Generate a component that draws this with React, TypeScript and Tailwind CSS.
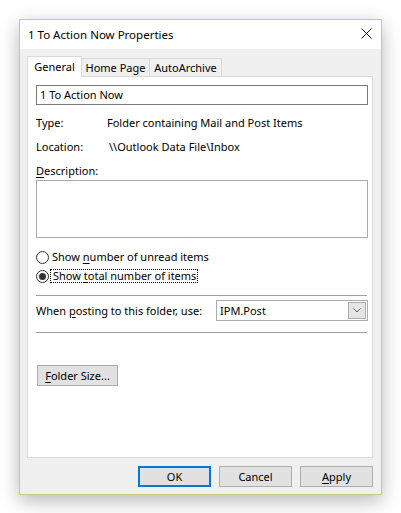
import type { ReactNode } from "react";

const FONT = "font-['Noto_Sans',sans-serif]";

const BTN =
  "flex h-[21px] items-center justify-center border bg-[#e1e1e1] text-[11px] text-black";

function Key({ children }: { children: ReactNode }) {
  return <span className="underline underline-offset-2">{children}</span>;
}

function Radio({ checked }: { checked?: boolean }) {
  return (
    <span className="flex h-[13px] w-[13px] shrink-0 items-center justify-center rounded-full border border-[#333333] bg-white">
      {checked && <span className="h-[7px] w-[7px] rounded-full bg-[#333333]" />}
    </span>
  );
}

function Tab({ label, width, active }: { label: string; width: string; active?: boolean }) {
  if (active) {
    return (
      <div
        className={`relative z-10 -mb-px flex h-[21px] items-start justify-center border border-b-0 border-[#d9d9d9] bg-white pt-[2px] ${width}`}
      >
        {label}
      </div>
    );
  }
  return (
    <div
      className={`-ml-px flex h-[18px] items-center justify-center border border-b-0 border-[#d9d9d9] bg-[#f0f0f0] pt-px ${width}`}
    >
      {label}
    </div>
  );
}

export default function App() {
  return (
    <div
      className={`${FONT} h-[513px] w-[401px] bg-white pl-[19px] pt-[19px] text-[11px] leading-[16px] text-black`}
    >
      <div className="flex h-[476px] w-[363px] flex-col border border-[#cfc58c] bg-[#f0f0f0] shadow-[0_6px_18px_rgba(0,0,0,0.28)]">
        {/* title bar */}
        <div className="flex h-[29px] items-center justify-between bg-white pl-[8px] pr-[9px]">
          <span className="text-[11.5px]">1 To Action Now Properties</span>
          <svg width="11" height="11" viewBox="0 0 11 11" className="mt-[-2px]">
            <path d="M0.5 0.5 L10.5 10.5 M10.5 0.5 L0.5 10.5" stroke="#111" strokeWidth="1" fill="none" />
          </svg>
        </div>

        <div className="flex flex-1 flex-col px-[7px] pt-[7px]">
          {/* tabs */}
          <div className="flex h-[20px] items-end">
            <Tab label="General" width="w-[55px]" active />
            <Tab label="Home Page" width="w-[69px]" />
            <Tab label="AutoArchive" width="w-[73px]" />
          </div>

          {/* tab page */}
          <div className="flex h-[382px] w-[346px] flex-col border border-[#d9d9d9] bg-white pl-[8px]">
            <div className="mt-[8px] flex h-[20px] w-[332px] items-center border border-[#7a7a7a] px-[3px]">
              1 To Action Now
            </div>

            <div className="mt-[10px] flex">
              <span className="w-[71px]">Type:</span>
              <span>Folder containing Mail and Post Items</span>
            </div>
            <div className="mt-[8px] flex">
              <span className="w-[73px]">Location:</span>
              <span>\\Outlook Data File\Inbox</span>
            </div>
            <div className="mt-[8px]">
              <Key>D</Key>escription:
            </div>
            <div className="mt-[1px] h-[58px] w-[332px] border border-[#ababab]" />

            <div className="mt-[11px] flex h-[16px] items-center gap-[3px]">
              <Radio />
              <span>
                Show <Key>n</Key>umber of unread items
              </span>
            </div>
            <div className="mt-[3px] flex h-[16px] items-center gap-[1px]">
              <Radio checked />
              <span className="flex h-[14px] items-center border border-dotted border-black pr-[1px] pl-[2px]">
                <span>
                  Show <Key>t</Key>otal number of items
                </span>
              </span>
            </div>

            <div className="mt-[11px] h-px w-[331px] bg-[#a0a0a0]" />

            <div className="mt-[4px] flex h-[21px] w-[332px] items-center justify-between">
              <span className="whitespace-nowrap">
                When <Key>p</Key>osting to this folder, use:
              </span>
              <div className="flex h-[21px] w-[152px] items-center justify-between border border-[#acacac] pl-[3px] pr-px">
                <span>IPM.Post</span>
                <div className="flex h-[17px] w-[18px] items-center justify-center border border-[#acacac] bg-[#e5e5e5]">
                  <svg width="8" height="5" viewBox="0 0 8 5">
                    <path d="M0.5 0.5 L4 4 L7.5 0.5" stroke="#606060" strokeWidth="1" fill="none" />
                  </svg>
                </div>
              </div>
            </div>

            <div className="mt-[11px] h-px w-[331px] bg-[#a0a0a0]" />

            <button className={`${BTN} ml-px mt-[32px] w-[81px] border-[#adadad]`}>
              <span>
                <Key>F</Key>older Size...
              </span>
            </button>
          </div>

          {/* dialog buttons */}
          <div className="mt-[8px] flex justify-end gap-[8px] pr-px">
            <button className={`${BTN} w-[73px] border-2 border-[#0078d7]`}>OK</button>
            <button className={`${BTN} w-[73px] border-[#adadad]`}>Cancel</button>
            <button className={`${BTN} w-[73px] border-[#adadad]`}>
              <span>
                <Key>A</Key>pply
              </span>
            </button>
          </div>
        </div>
      </div>
    </div>
  );
}
